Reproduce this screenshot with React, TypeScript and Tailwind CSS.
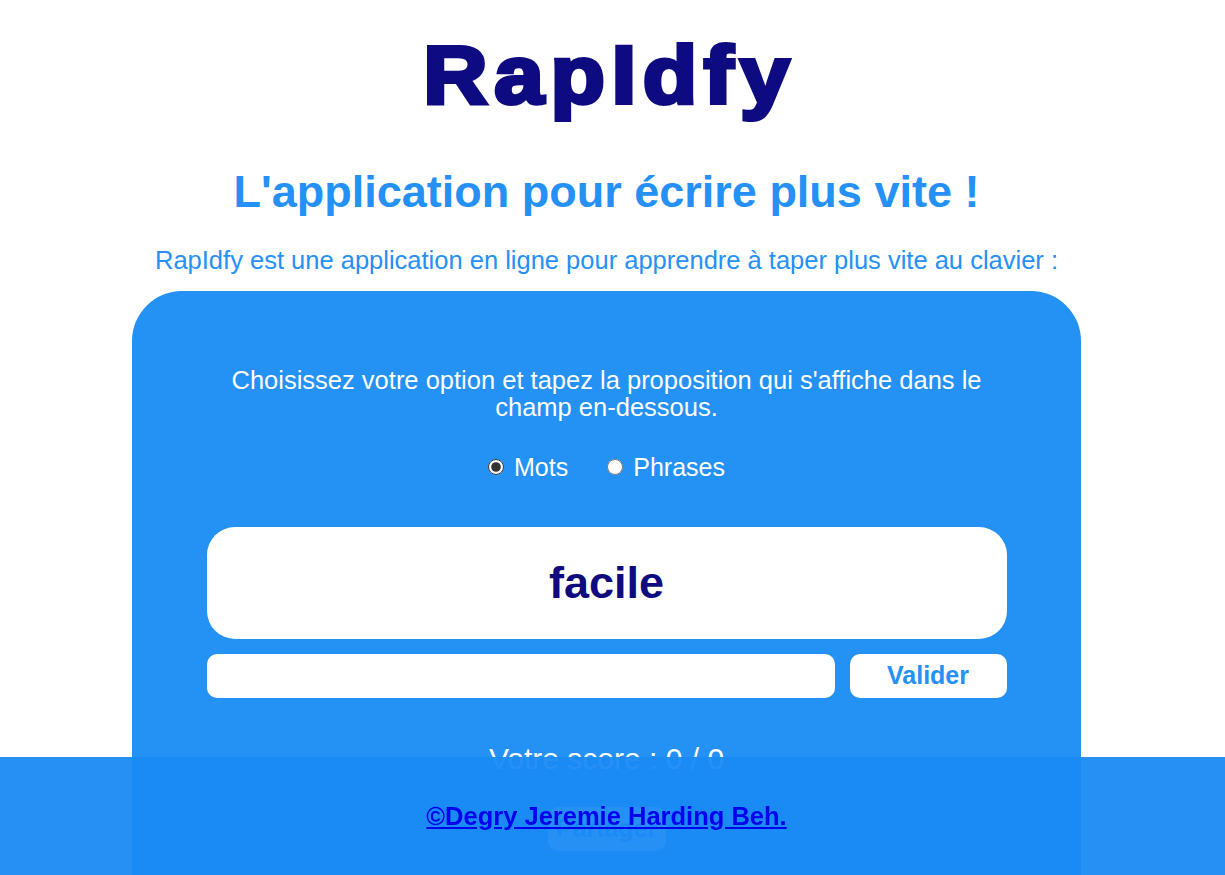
import { useState } from "react";

export default function App() {
  const [mode, setMode] = useState("mots");

  return (
    <div className="min-h-screen bg-white pr-[12px] font-['Liberation_Sans',Arial,sans-serif] flex flex-col items-center">
      <h1 className="mt-[35px] pl-[6px] text-[81px] leading-none font-bold text-[#0e0a80] tracking-[6px] scale-x-[1.1] [-webkit-text-stroke:4px_#0e0a80]">
        RapIdfy
      </h1>
      <h2 className="mt-[53px] text-[45px] leading-none font-bold text-[#2590f5]">
        L'application pour écrire plus vite !
      </h2>
      <p className="mt-[34px] text-[25.5px] leading-none text-[#2590f5]">
        RapIdfy est une application en ligne pour apprendre à taper plus vite au clavier :
      </p>

      <main className="mt-[17px] w-[949px] rounded-[50px] bg-[#2491f5] pt-[76px] pb-[120px] flex flex-col items-center">
        <div className="w-[800px] flex flex-col items-center">
          <p className="w-full text-center text-[25.5px] leading-[27px] text-white">
            Choisissez votre option et tapez la proposition qui s'affiche dans le champ en-dessous.
          </p>

          <div className="mt-[34px] flex items-center gap-[39px] text-[25px] leading-none text-white">
            <label className="flex items-center gap-[10px]">
              <input
                type="radio"
                name="mode"
                checked={mode === "mots"}
                onChange={() => setMode("mots")}
                className="w-4 h-4 m-0 accent-[#333333]"
              />
              Mots
            </label>
            <label className="flex items-center gap-[10px]">
              <input
                type="radio"
                name="mode"
                checked={mode === "phrases"}
                onChange={() => setMode("phrases")}
                className="w-4 h-4 m-0 accent-[#333333]"
              />
              Phrases
            </label>
          </div>

          <div className="mt-[47px] w-full h-[112px] rounded-[28px] bg-white flex items-center justify-center">
            <span className="text-[45px] font-bold text-[#0e0a80]">facile</span>
          </div>

          <div className="mt-[15px] w-full flex gap-[15px]">
            <input
              type="text"
              className="flex-1 h-[44px] rounded-[10px] bg-white px-3 text-[22px] outline-none"
            />
            <button className="w-[157px] h-[44px] rounded-[10px] bg-white text-[25px] font-bold text-[#2590f5]">
              Valider
            </button>
          </div>

          <p className="mt-[46px] text-[30px] leading-none text-white">Votre score : 0 / 0</p>

          <button className="mt-[33px] w-[118px] h-[44px] rounded-[10px] bg-white text-[25px] font-bold text-[#2590f5]">
            Partager
          </button>
        </div>
      </main>

      <footer className="fixed bottom-0 left-0 right-0 h-[118px] pr-[12px] bg-[#1a8af4]/95 flex items-center justify-center">
        <a href="#" className="text-[25.5px] font-bold text-[#0000ee] underline">
          ©Degry Jeremie Harding Beh.
        </a>
      </footer>
    </div>
  );
}
